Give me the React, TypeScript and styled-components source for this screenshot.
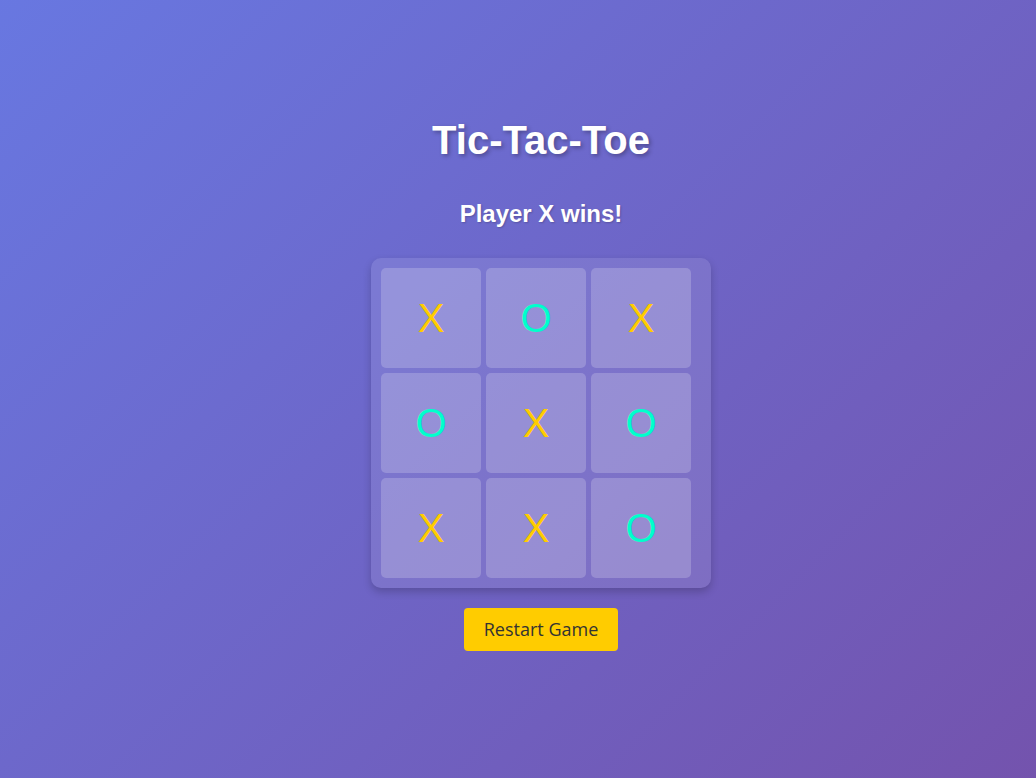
import React, { useState } from "react";
import styled, { createGlobalStyle } from "styled-components";

type Mark = "X" | "O" | null;

const initialBoard: Mark[] = ["X", "O", "X", "O", "X", "O", "X", "X", "O"];

export default function App() {
  const [cells, setCells] = useState<Mark[]>(initialBoard);

  const restartGame = () => {
    setCells(Array(9).fill(null));
  };

  return (
    <React.Fragment>
      <GlobalStyle />
      <PageContainer>
        <Title>{"Tic-Tac-Toe"}</Title>
        <Status>{"Player X wins!"}</Status>
        <Board>
          {cells.map((mark, index) => (
            <Cell key={index} mark={mark}>
              {mark}
            </Cell>
          ))}
        </Board>
        <RestartButton onClick={restartGame}>{"Restart Game"}</RestartButton>
      </PageContainer>
    </React.Fragment>
  );
}

const GlobalStyle = createGlobalStyle`
  html, body {
    margin: 0;
    padding: 0;
  }

  body {
    min-height: 100vh;
    background: linear-gradient(135deg, #667eea -18%, #764ba2 122%);
    font-family: "Liberation Sans", Arial, sans-serif;
    color: #ffffff;
  }
`;

const PageContainer = styled.div`
  display: flex;
  flex-direction: column;
  align-items: center;
  min-height: 100vh;
  box-sizing: border-box;
  padding: 117px 0 0 46px;
`;

const Title = styled.h1`
  margin: 0 0 37px;
  font-size: 40px;
  font-weight: bold;
  line-height: 46px;
  text-shadow: 2px 2px 4px rgba(0, 0, 0, 0.3);
`;

const Status = styled.div`
  margin-bottom: 30px;
  font-size: 24px;
  font-weight: bold;
  line-height: 28px;
  text-shadow: 1px 1px 2px rgba(0, 0, 0, 0.2);
`;

const Board = styled.div`
  display: grid;
  grid-template-columns: repeat(3, 100px);
  grid-template-rows: repeat(3, 100px);
  gap: 5px;
  width: 320px;
  padding: 10px;
  background-color: rgba(255, 255, 255, 0.1);
  border-radius: 10px;
  box-shadow: 0 4px 8px rgba(0, 0, 0, 0.2);
`;

const Cell = styled.div<{ mark: Mark }>`
  display: flex;
  align-items: center;
  justify-content: center;
  background-color: rgba(255, 255, 255, 0.2);
  border-radius: 5px;
  font-size: 40px;
  cursor: pointer;
  color: ${(props) => (props.mark === "X" ? "#ffcc00" : "#00ffcc")};
`;

const RestartButton = styled.button`
  margin-top: 20px;
  padding: 10px 20px;
  border: none;
  border-radius: 4px;
  background-color: #ffcc00;
  color: #333333;
  font-family: "Open Sans", sans-serif;
  font-size: 18px;
  line-height: 23px;
  cursor: pointer;
`;
